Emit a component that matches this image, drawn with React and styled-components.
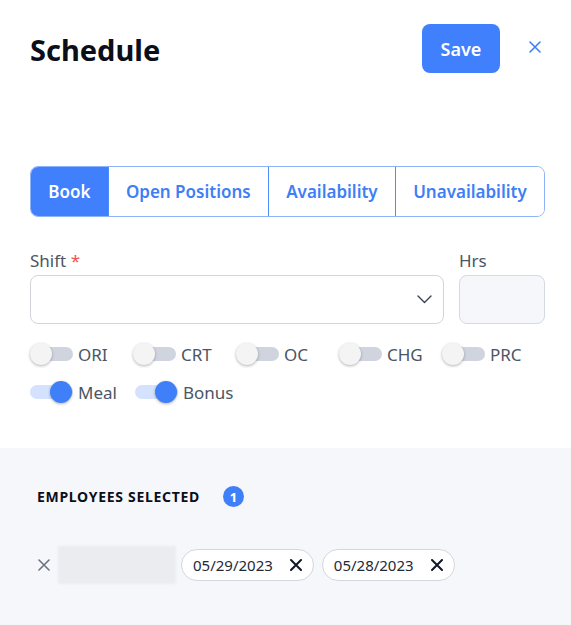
import React, { useState } from 'react'
import styled, { createGlobalStyle } from 'styled-components'

const GlobalStyle = createGlobalStyle`
  html, body {
    margin: 0;
    padding: 0;
    background: #ffffff;
  }
  body {
    font-family: 'Noto Sans', 'Open Sans', Arial, sans-serif;
    color: #111827;
  }
  * {
    box-sizing: border-box;
  }
`

const tabs = ['Book', 'Open Positions', 'Availability', 'Unavailability']

const flags = [
  { id: 'ori', label: 'ORI', on: false },
  { id: 'crt', label: 'CRT', on: false },
  { id: 'oc', label: 'OC', on: false },
  { id: 'chg', label: 'CHG', on: false },
  { id: 'prc', label: 'PRC', on: false },
]

const extras = [
  { id: 'meal', label: 'Meal', on: true },
  { id: 'bonus', label: 'Bonus', on: true },
]

const dates = ['05/29/2023', '05/28/2023']

function CloseIcon({ size = 12, stroke = 2, color = 'currentColor' }) {
  return (
    <svg width={size} height={size} viewBox="0 0 12 12" fill="none">
      <path
        d="M1 1L11 11M11 1L1 11"
        stroke={color}
        strokeWidth={stroke}
        strokeLinecap="round"
      />
    </svg>
  )
}

function Toggle({ label, on, onChange }) {
  return (
    <ToggleLabel onClick={onChange}>
      <Track $on={on}>
        <Knob $on={on} />
      </Track>
      <span>{label}</span>
    </ToggleLabel>
  )
}

function App() {
  const [activeTab, setActiveTab] = useState('Book')
  const [state, setState] = useState(() => {
    const s = {}
    ;[...flags, ...extras].forEach((f) => (s[f.id] = f.on))
    return s
  })

  const flip = (id) => setState((prev) => ({ ...prev, [id]: !prev[id] }))

  return (
    <Panel>
      <GlobalStyle />
      <Body>
        <Header>
          <Title>Schedule</Title>
          <Actions>
            <SaveButton>Save</SaveButton>
            <IconButton aria-label="Close">
              <CloseIcon size={12} stroke={1.6} />
            </IconButton>
          </Actions>
        </Header>

        <TabBar>
          {tabs.map((tab) => (
            <Tab
              key={tab}
              $active={activeTab === tab}
              onClick={() => setActiveTab(tab)}
            >
              {tab}
            </Tab>
          ))}
        </TabBar>

        <FieldRow>
          <Field>
            <Label>
              Shift <Required>*</Required>
            </Label>
            <Select>
              <svg width="15" height="9" viewBox="0 0 15 9" fill="none">
                <path
                  d="M1 1L7.5 7.5L14 1"
                  stroke="#374151"
                  strokeWidth="1.4"
                  strokeLinecap="round"
                  strokeLinejoin="round"
                />
              </svg>
            </Select>
          </Field>
          <Field>
            <Label>Hrs</Label>
            <HoursInput />
          </Field>
        </FieldRow>

        <FlagGrid>
          {flags.map((f) => (
            <Toggle
              key={f.id}
              label={f.label}
              on={state[f.id]}
              onChange={() => flip(f.id)}
            />
          ))}
        </FlagGrid>
        <ExtraRow>
          {extras.map((f) => (
            <Toggle
              key={f.id}
              label={f.label}
              on={state[f.id]}
              onChange={() => flip(f.id)}
            />
          ))}
        </ExtraRow>
      </Body>

      <Selected>
        <SelectedHead>
          <SectionTitle>Employees Selected</SectionTitle>
          <Badge>1</Badge>
        </SelectedHead>
        <EmployeeRow>
          <RemoveButton aria-label="Remove employee">
            <CloseIcon size={12} stroke={1.6} />
          </RemoveButton>
          <HiddenName />
          {dates.map((d) => (
            <Chip key={d}>
              {d}
              <CloseIcon size={12} stroke={2} color="#111827" />
            </Chip>
          ))}
        </EmployeeRow>
      </Selected>
    </Panel>
  )
}

const Panel = styled.div`
  width: 571px;
  min-height: 625px;
  display: flex;
  flex-direction: column;
  background: #ffffff;
`

const Body = styled.div`
  padding: 24px 26px 0 30px;
`

const Header = styled.div`
  display: flex;
  align-items: center;
  justify-content: space-between;
  height: 49px;
`

const Title = styled.h1`
  margin: 0;
  font-size: 29px;
  font-weight: 700;
  color: #0b0f1a;
  padding-top: 2px;
`

const Actions = styled.div`
  display: flex;
  align-items: center;
  gap: 29px;
`

const SaveButton = styled.button`
  width: 78px;
  height: 49px;
  border: none;
  border-radius: 8px;
  background: #4080fd;
  color: #ffffff;
  font-family: inherit;
  font-size: 18px;
  font-weight: 600;
  cursor: pointer;
`

const IconButton = styled.button`
  border: none;
  background: none;
  padding: 0;
  display: flex;
  color: #3f7ff5;
  cursor: pointer;
  margin: -3px 4px 0 0;
`

const TabBar = styled.div`
  display: flex;
  margin-top: 93px;
  height: 51px;
  border: 1px solid #8db3fa;
  border-radius: 8px;
  overflow: hidden;
`

const Tab = styled.div`
  flex: 1 1 auto;
  display: flex;
  align-items: center;
  justify-content: center;
  padding: 0 12px;
  white-space: nowrap;
  font-size: 17px;
  font-weight: 600;
  color: ${(p) => (p.$active ? '#ffffff' : '#3f7ff5')};
  background: ${(p) => (p.$active ? '#4080fd' : '#ffffff')};
  border-left: 1px solid #4f8cf7;
  cursor: pointer;
  &:first-child {
    border-left: none;
  }
`

const FieldRow = styled.div`
  display: grid;
  grid-template-columns: 1fr 86px;
  gap: 15px;
  margin-top: 32px;
`

const Field = styled.div`
  display: flex;
  flex-direction: column;
`

const Label = styled.label`
  font-size: 17px;
  color: #4b5563;
  line-height: 24px;
  margin-bottom: 2px;
`

const Required = styled.span`
  color: #f05252;
`

const Select = styled.div`
  height: 49px;
  border: 1px solid #d1d5db;
  border-radius: 8px;
  background: #ffffff;
  display: flex;
  align-items: center;
  justify-content: flex-end;
  padding-right: 11px;
`

const HoursInput = styled.div`
  height: 49px;
  border: 1px solid #d5d9e2;
  border-radius: 8px;
  background: #f5f7fb;
`

const FlagGrid = styled.div`
  display: grid;
  grid-template-columns: repeat(5, 1fr);
  margin-top: 19px;
`

const ExtraRow = styled.div`
  display: flex;
  gap: 18px;
  margin-top: 16px;
  margin-bottom: 45px;
`

const ToggleLabel = styled.div`
  display: flex;
  align-items: center;
  gap: 5px;
  height: 22px;
  font-size: 17px;
  color: #4b5563;
  cursor: pointer;
`

const Track = styled.div`
  position: relative;
  width: 43px;
  height: 14px;
  border-radius: 7px;
  background: ${(p) => (p.$on ? '#d4e2fd' : '#cfd4df')};
`

const Knob = styled.div`
  position: absolute;
  top: -4px;
  left: ${(p) => (p.$on ? '20px' : '0')};
  width: 22px;
  height: 22px;
  border-radius: 50%;
  background: ${(p) => (p.$on ? '#3f7ff8' : '#f4f4f5')};
  box-shadow: 0 1px 3px rgba(0, 0, 0, 0.3);
`

const Selected = styled.div`
  flex: 1;
  background: #f6f7fb;
  padding: 38px 30px 30px 37px;
`

const SelectedHead = styled.div`
  display: flex;
  align-items: center;
  gap: 23px;
`

const SectionTitle = styled.h2`
  margin: 0;
  font-size: 14px;
  font-weight: 700;
  text-transform: uppercase;
  letter-spacing: 0.7px;
  color: #0b0f1a;
`

const Badge = styled.span`
  width: 21px;
  height: 21px;
  border-radius: 50%;
  background: #3f7ff8;
  color: #ffffff;
  font-size: 13px;
  font-weight: 700;
  display: flex;
  align-items: center;
  justify-content: center;
`

const EmployeeRow = styled.div`
  display: flex;
  align-items: center;
  margin-top: 39px;
  margin-left: 1px;
`

const RemoveButton = styled.button`
  border: none;
  background: none;
  padding: 0;
  display: flex;
  color: #6b7280;
  margin-right: 8px;
`

const HiddenName = styled.div`
  width: 118px;
  height: 38px;
  background: #ebecf0;
  filter: blur(1px);
  margin-right: 5px;
`

const Chip = styled.div`
  display: flex;
  align-items: center;
  gap: 17px;
  height: 32px;
  padding: 0 11px;
  margin-right: 8px;
  border: 1px solid #d5d7de;
  border-radius: 16px;
  background: #ffffff;
  font-size: 15px;
  color: #1f2937;
`

export default App
